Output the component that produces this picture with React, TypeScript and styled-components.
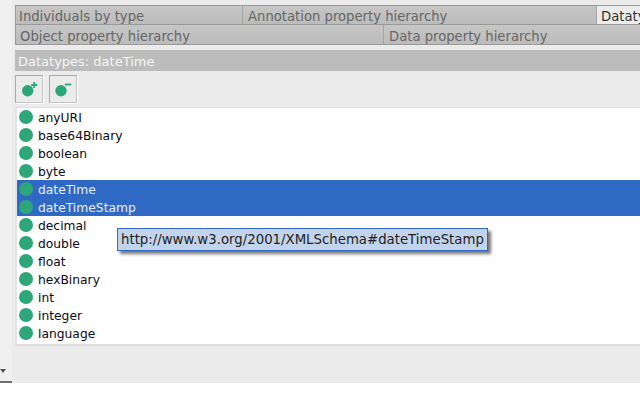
import React from "react";
import styled, { createGlobalStyle } from "styled-components";

const Global = createGlobalStyle`
  html, body { margin: 0; padding: 0; background: #fff; }
  #root { width: 640px; height: 400px; overflow: hidden; }
`;
const FONT = `"DejaVu Sans", Verdana, sans-serif`;

const Page = styled.div`
  width: 640px;
  height: 383px;
  display: flex;
  background: #ebebeb;
  font-family: ${FONT};
  font-size: 12px;
  overflow: hidden;
`;
const Gutter = styled.div`
  width: 12px;
  flex: none;
  background: #f0f0f0;
  display: flex;
  flex-direction: column;
  justify-content: flex-end;
`;
const DropArrow = styled.div`
  width: 0;
  height: 0;
  margin: 0 0 8px 0;
  border-left: 3.5px solid transparent;
  border-right: 3.5px solid transparent;
  border-top: 4px solid #555;
`;
const GutterEdge = styled.div`
  height: 2px;
  background: #6f6f6f;
`;
const Main = styled.div`
  position: relative;
  flex: none;
  width: 625px;
  margin-left: 3px;
  padding-top: 5px;
  display: flex;
  flex-direction: column;
`;
const TabRow = styled.div<{ $top?: boolean }>`
  height: 20px;
  box-sizing: border-box;
  display: flex;
  border-top: ${p => (p.$top ? "1px solid #9a9a9a" : "0")};
  border-bottom: 1px solid #9a9a9a;
  border-left: 1px solid #9a9a9a;
  background: linear-gradient(#c6c6c6, #bcbcbc);
`;
const Tab = styled.div<{ $w: number; $pad: number; $active?: boolean; $offset: number }>`
  flex: 0 0 ${p => p.$w}px;
  box-sizing: border-box;
  padding-left: ${p => p.$pad}px;
  padding-top: ${p => p.$offset}px;
  line-height: 18px;
  font-size: 13.2px;
  white-space: nowrap;
  overflow: hidden;
  color: ${p => (p.$active ? "#333" : "#666")};
  background: ${p => (p.$active ? "#ececec" : "transparent")};
  border-right: 1px solid #a4a4a4;
`;
const Title = styled.div`
  margin-top: 5px;
  height: 21px;
  background: #bcbcbc;
  color: #f6f6f6;
  font-size: 13px;
  line-height: 24px;
  padding-left: 3px;
`;
const Toolbar = styled.div`
  display: flex;
  gap: 6px;
  height: 36px;
  padding-top: 4px;
  box-sizing: border-box;
`;
const ToolButton = styled.div`
  width: 28px;
  height: 28px;
  box-sizing: border-box;
  border: 1px solid;
  border-color: #a9a9a9 #c4c4c4 #c4c4c4 #a9a9a9;
  box-shadow: 1px 1px 0 #fff;
  display: flex;
  align-items: center;
  justify-content: center;
`;
const List = styled.div`
  height: 239px;
  background: #fff;
  border-top: 1px solid #dedede;
  border-left: 2px solid #e4e4e4;
  border-bottom: 2px solid #dedede;
  box-sizing: border-box;
`;
const Row = styled.div<{ $selected?: boolean }>`
  height: 18px;
  display: flex;
  align-items: center;
  padding-left: 2px;
  gap: 5px;
  font-size: 12.3px;
  color: ${p => (p.$selected ? "#e8eef8" : "#0a0a14")};
  background: ${p => (p.$selected ? "#2f69c4" : "transparent")};
`;
const Dot = styled.span`
  width: 14px;
  height: 14px;
  flex: none;
  border-radius: 50%;
  background: #2da77a;
`;
const Label = styled.span`
  padding-top: 2px;
`;
const Tip = styled.div`
  position: absolute;
  left: 102px;
  top: 228px;
  height: 23px;
  box-sizing: border-box;
  padding: 0 3px;
  line-height: 22px;
  font-size: 13.3px;
  color: #222;
  white-space: nowrap;
  background: #c2d4ec;
  border: 1px solid #2f69c4;
  box-shadow: 3px 3px 3px #777;
`;

const Add = () => (
  <svg width="20" height="20" viewBox="0 0 20 20">
    <circle cx="8.7" cy="11.8" r="5.7" fill="#2da77a" />
    <path d="M15.2 3v6M12.2 6h6" stroke="#2da77a" strokeWidth="1.8" />
  </svg>
);
const Remove = () => (
  <svg width="20" height="20" viewBox="0 0 20 20">
    <circle cx="8" cy="11.8" r="5.7" fill="#2da77a" />
    <path d="M11.8 5.5h6.4" stroke="#2da77a" strokeWidth="1.8" />
  </svg>
);

const items = [
  "anyURI", "base64Binary", "boolean", "byte", "dateTime", "dateTimeStamp",
  "decimal", "double", "float", "hexBinary", "int", "integer", "language",
];
const selected = new Set(["dateTime", "dateTimeStamp"]);

export default function App() {
  return (
    <>
      <Global />
      <Page>
        <Gutter>
          <DropArrow />
          <GutterEdge />
        </Gutter>
        <Main>
          <TabRow $top>
            <Tab $w={227} $pad={3} $offset={2}>Individuals by type</Tab>
            <Tab $w={354} $pad={5} $offset={2}>Annotation property hierarchy</Tab>
            <Tab $w={60} $pad={4} $offset={2} $active>Datatypes</Tab>
          </TabRow>
          <TabRow>
            <Tab $w={368} $pad={4} $offset={3}>Object property hierarchy</Tab>
            <Tab $w={260} $pad={5} $offset={3}>Data property hierarchy</Tab>
          </TabRow>
          <Title>Datatypes: dateTime</Title>
          <Toolbar>
            <ToolButton><Add /></ToolButton>
            <ToolButton><Remove /></ToolButton>
          </Toolbar>
          <List>
            {items.map(i => (
              <Row key={i} $selected={selected.has(i)}>
                <Dot />
                <Label>{i}</Label>
              </Row>
            ))}
          </List>
          <Tip>http://www.w3.org/2001/XMLSchema#dateTimeStamp</Tip>
        </Main>
      </Page>
    </>
  );
}
